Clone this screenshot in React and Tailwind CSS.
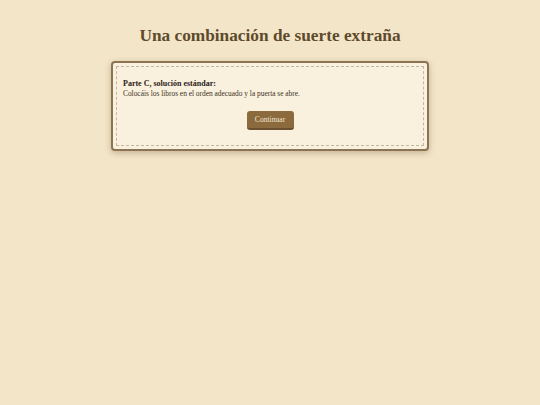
export default function App() {
  return (
    <div
      className="min-h-[405px] w-full bg-[#f3e5c8] flex flex-col items-center"
      style={{ fontFamily: "'Liberation Serif', 'Times New Roman', serif" }}
    >
      <h1 className="mt-[26px] text-[17.3px] leading-[20px] font-bold text-[#5e4a2c]">
        Una combinación de suerte extraña
      </h1>
      <div className="mt-[15px] w-[318px] rounded-[4px] border-2 border-[#8c7354] bg-[#faf0de] p-[3px] shadow-[0_2px_6px_rgba(90,60,20,0.3)]">
        <div className="border border-dashed border-[#c4b6a0] px-[6px] pt-[12px] h-[80px]">
          <p className="text-[8px] leading-[10px] font-bold text-[#2b2217]">Parte C, solución estándar:</p>
          <p className="text-[7.4px] leading-[10px] text-[#3a3024]">
            Colocáis los libros en el orden adecuado y la puerta se abre.
          </p>
          <div className="mt-[12px] flex justify-center">
            <button className="h-[19px] w-[47px] rounded-[3px] bg-[#8b6a3e] border-b-2 border-[#6b5030] text-[7.6px] text-[#f1e6cf]">
              Continuar
            </button>
          </div>
        </div>
      </div>
    </div>
  );
}
